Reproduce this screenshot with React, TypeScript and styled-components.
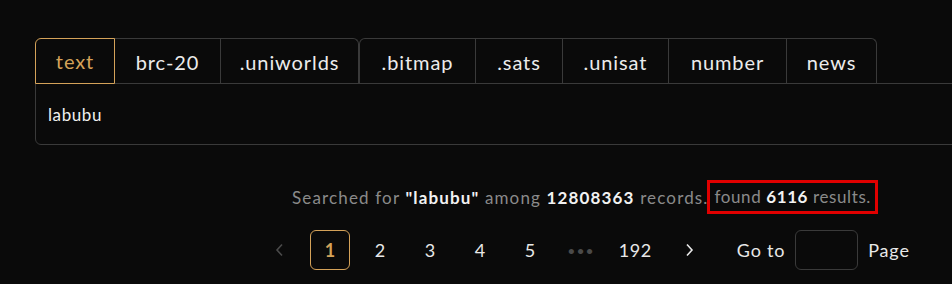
import React from 'react';
import styled, { createGlobalStyle } from 'styled-components';

const GlobalStyle = createGlobalStyle`
  html, body {
    margin: 0;
    padding: 0;
    background: #0a0a0a;
    overflow: hidden;
  }
  body {
    font-family: Lato, 'Noto Sans', sans-serif;
    color: #e6e6e6;
  }
`;

const gold = '#d4a259';
const line = '#3a3a3a';

const Page = styled.div`
  width: 1100px;
  padding: 38px 0 0 35px;
`;

const TabBar = styled.div`
  display: flex;
  align-items: flex-end;
`;

const TabGroup = styled.div`
  display: flex;
`;

const Tab = styled.div<{ $active?: boolean; $first?: boolean; $last?: boolean }>`
  height: 46px;
  box-sizing: border-box;
  display: flex;
  align-items: center;
  justify-content: center;
  font-size: 20px;
  letter-spacing: 0.9px;
  color: ${(p) => (p.$active ? gold : '#ececec')};
  border: 1px solid ${(p) => (p.$active ? gold : line)};
  border-bottom: ${(p) => (p.$active ? `1px solid ${gold}` : 'none')};
  margin-left: -1px;
  border-top-left-radius: ${(p) => (p.$first ? '6px' : '0')};
  border-top-right-radius: ${(p) => (p.$last ? '6px' : '0')};
  position: relative;
  z-index: ${(p) => (p.$active ? 1 : 0)};
  &:first-child {
    margin-left: 0;
  }
`;

const Panel = styled.div`
  height: 62px;
  box-sizing: border-box;
  border: 1px solid ${line};
  border-radius: 0 0 0 6px;
  margin-top: -1px;
  display: flex;
  align-items: center;
  padding-left: 12px;
  font-size: 17px;
  letter-spacing: 0.6px;
  color: #f0f0f0;
`;

const Summary = styled.div`
  display: flex;
  justify-content: center;
  align-items: center;
  margin-top: 35px;
  font-size: 17px;
  color: #8a8a8a;
  letter-spacing: 1.15px;
  white-space: pre;
`;

const Strong = styled.span`
  color: #f2f2f2;
  font-weight: 700;
`;

const Highlight = styled.span`
  border: 3px solid #e00000;
  padding: 3px 4px 4px 0;
  margin-left: -2px;
  letter-spacing: 0.6px;
`;

const Pager = styled.div`
  display: flex;
  justify-content: center;
  align-items: center;
  gap: 10px;
  margin-top: 16px;
`;

const PageItem = styled.div<{ $active?: boolean; $muted?: boolean }>`
  min-width: 40px;
  height: 40px;
  padding: 0 6px;
  box-sizing: border-box;
  display: flex;
  align-items: center;
  justify-content: center;
  border-radius: 6px;
  font-size: 18px;
  letter-spacing: 0.6px;
  border: 1px solid ${(p) => (p.$active ? gold : 'transparent')};
  color: ${(p) => (p.$active ? gold : p.$muted ? '#4a4a4a' : '#e8e8e8')};
  font-weight: ${(p) => (p.$active ? 700 : 400)};
`;

const Dots = styled.span`
  font-size: 14px;
  letter-spacing: 1px;
  color: #4a4a4a;
`;

const Jumper = styled.div`
  display: flex;
  align-items: center;
  gap: 10px;
  margin-left: 18px;
  font-size: 18px;
  letter-spacing: 0.8px;
  color: #e8e8e8;
`;

const JumpInput = styled.div`
  width: 63px;
  height: 40px;
  box-sizing: border-box;
  border: 1px solid ${line};
  border-radius: 6px;
`;

const Arrow = ({ dir }: { dir: 'left' | 'right' }) => (
  <svg width="12" height="14" viewBox="0 0 12 14" fill="none" stroke="currentColor" strokeWidth="1.6">
    {dir === 'left' ? <path d="M8 1.5 L3 7 L8 12.5" /> : <path d="M4 1.5 L9 7 L4 12.5" />}
  </svg>
);

const widths: Record<string, number> = {
  text: 80,
  'brc-20': 107,
  '.uniworlds': 139,
  '.bitmap': 117,
  '.sats': 88,
  '.unisat': 107,
  number: 119,
  news: 91,
};

const groups = [
  ['text', 'brc-20', '.uniworlds'],
  ['.bitmap', '.sats', '.unisat', 'number', 'news'],
];

export default function App() {
  return (
    <>
      <GlobalStyle />
      <Page>
        <TabBar>
          {groups.map((g, gi) => (
            <TabGroup key={gi}>
              {g.map((t, i) => (
                <Tab
                  key={t}
                  $active={t === 'text'}
                  $first={i === 0}
                  $last={i === g.length - 1}
                  style={{ width: widths[t] }}
                >
                  {t}
                </Tab>
              ))}
            </TabGroup>
          ))}
        </TabBar>
        <Panel>labubu</Panel>
        <Summary>
          Searched for <Strong>"labubu"</Strong> among <Strong>12808363</Strong> records.
          <Highlight>
            {' '}found <Strong>6116</Strong> results.
          </Highlight>
        </Summary>
        <Pager>
          <PageItem $muted>
            <Arrow dir="left" />
          </PageItem>
          <PageItem $active>1</PageItem>
          <PageItem>2</PageItem>
          <PageItem>3</PageItem>
          <PageItem>4</PageItem>
          <PageItem>5</PageItem>
          <PageItem>
            <Dots>•••</Dots>
          </PageItem>
          <PageItem>192</PageItem>
          <PageItem>
            <Arrow dir="right" />
          </PageItem>
          <Jumper>
            Go to
            <JumpInput />
            Page
          </Jumper>
        </Pager>
      </Page>
    </>
  );
}
